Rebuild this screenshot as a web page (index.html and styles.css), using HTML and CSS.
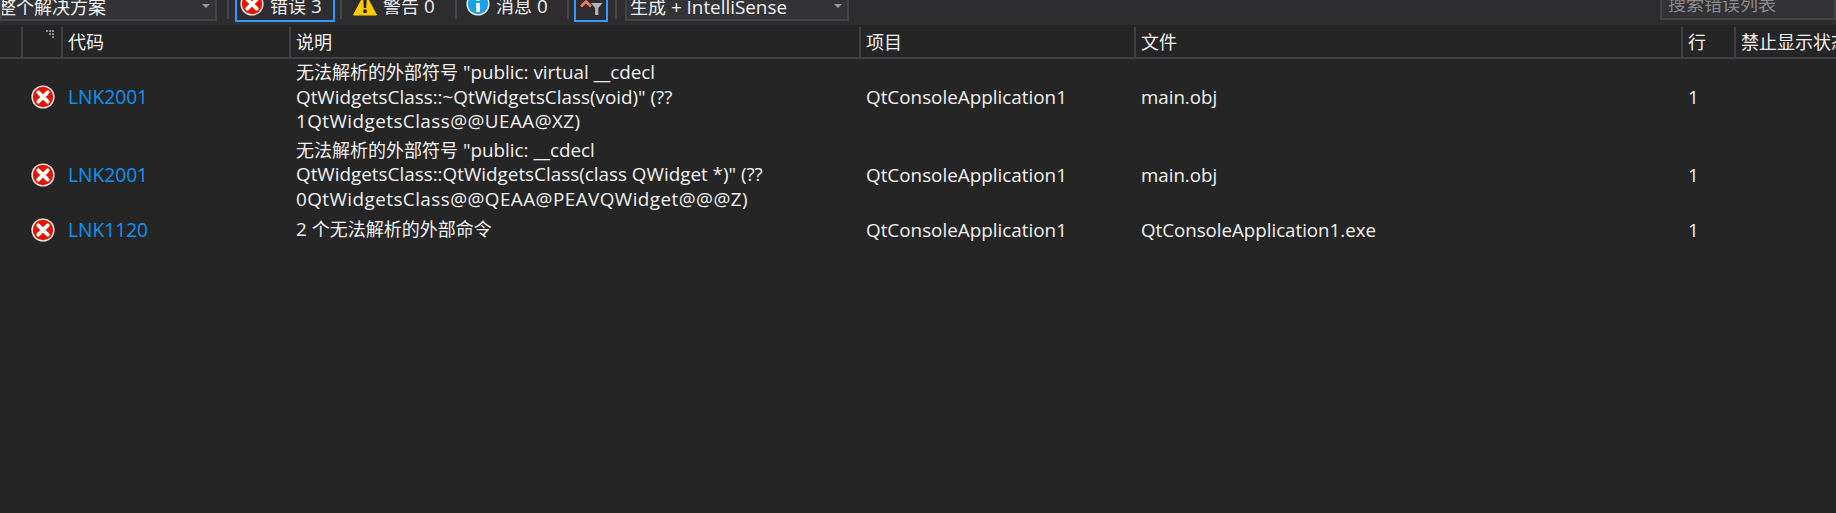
FILE: index.html
```html
<!DOCTYPE html>
<html lang="zh">
<head>
<meta charset="utf-8">
<title>错误列表</title>
<link rel="stylesheet" href="styles.css">
</head>
<body>
<svg class="defs" width="0" height="0">
  <symbol id="err" viewBox="0 0 24 24">
    <circle cx="12" cy="12" r="11.6" fill="#ececec"/>
    <circle cx="12" cy="12" r="10.2" fill="#e51400"/>
    <path d="M7.3 7.3l9.4 9.4M16.7 7.3l-9.4 9.4" stroke="#fff" stroke-width="3.8" stroke-linecap="round"/>
  </symbol>
</svg>
<div class="toolbar">
  <div class="combo scope"><span class="zh">整个解决方案</span><i class="caret"></i></div>
  <i class="grip g1"></i>
  <div class="tb errbtn"><svg class="ico"><use href="#err"/></svg><span><span class="zh">错误</span> 3</span></div>
  <i class="grip g2"></i>
  <div class="tb warnbtn">
    <svg class="ico" viewBox="0 0 24 24"><path d="M12 1.5L23.5 23H.5z" fill="#ffcc00" stroke="#ffcc00" stroke-width="1" stroke-linejoin="round"/><path d="M10.3 7h3.4l-.5 9h-2.4zM10.3 17.5h3.4V21h-3.4z" fill="#1e1e1e"/></svg>
    <span><span class="zh">警告</span> 0</span>
  </div>
  <i class="grip g3"></i>
  <div class="tb infobtn">
    <svg class="ico" viewBox="0 0 24 24"><circle cx="12" cy="12" r="11.6" fill="#ececec"/><circle cx="12" cy="12" r="10.2" fill="#1ba1e2"/><path d="M10.2 11h3.6v9h-3.6zM10.2 5.2h3.6v3.6h-3.6z" fill="#fff"/></svg>
    <span><span class="zh">消息</span> 0</span>
  </div>
  <i class="grip g4"></i>
  <div class="filter">
    <svg width="30" height="20" viewBox="0 0 30 20"><path d="M5 6.5l5-5 5 5" fill="none" stroke="#f47a5f" stroke-width="2.6"/><path d="M15 3h11.5l-4.2 5v7h-3.2V8z" fill="#b4b4b4"/></svg>
  </div>
  <i class="grip g5"></i>
  <div class="combo build"><span><span class="zh">生成</span> + IntelliSense</span><i class="caret"></i></div>
  <div class="search"><span class="zh">搜索错误列表</span></div>
</div>
<div class="list">
  <div class="row head">
    <div class="c0"></div>
    <div class="c1"><svg class="sort" width="9" height="9" viewBox="0 0 9 9"><path d="M0 0h2v2H0zM3 0h2v2H3zM6 0h2v2H6zM3 3h2v2H3zM6 3h2v2H6zM6 6h2v2H6z" fill="#8a8a8a"/></svg></div>
    <div class="c2 zh">代码</div>
    <div class="c3 zh">说明</div>
    <div class="c4 zh">项目</div>
    <div class="c5 zh">文件</div>
    <div class="c6 zh">行</div>
    <div class="c7 zh">禁止显示状态</div>
  </div>
  <div class="row item tall first">
    <div class="c0"></div>
    <div class="c1"><svg class="ico"><use href="#err"/></svg></div>
    <div class="c2 code">LNK2001</div>
    <div class="c3"><span class="zh">无法解析的外部符号</span> "public: virtual __cdecl<br>QtWidgetsClass::~QtWidgetsClass(void)" (??<br><span class="mangled">1QtWidgetsClass@@UEAA@XZ)</span></div>
    <div class="c4">QtConsoleApplication1</div>
    <div class="c5">main.obj</div>
    <div class="c6">1</div>
    <div class="c7"></div>
  </div>
  <div class="row item tall">
    <div class="c0"></div>
    <div class="c1"><svg class="ico"><use href="#err"/></svg></div>
    <div class="c2 code">LNK2001</div>
    <div class="c3"><span class="zh">无法解析的外部符号</span> "public: __cdecl<br>QtWidgetsClass::QtWidgetsClass(class QWidget *)" (??<br><span class="mangled">0QtWidgetsClass@@QEAA@PEAVQWidget@@@Z)</span></div>
    <div class="c4">QtConsoleApplication1</div>
    <div class="c5">main.obj</div>
    <div class="c6">1</div>
    <div class="c7"></div>
  </div>
  <div class="row item short">
    <div class="c0"></div>
    <div class="c1"><svg class="ico"><use href="#err"/></svg></div>
    <div class="c2 code">LNK1120</div>
    <div class="c3">2 <span class="zh">个无法解析的外部命令</span></div>
    <div class="c4">QtConsoleApplication1</div>
    <div class="c5">QtConsoleApplication1.exe</div>
    <div class="c6">1</div>
    <div class="c7"></div>
  </div>
</div>
</body>
</html>
```
FILE: styles.css
```css
html, body {
  margin: 0;
  height: 100%;
  overflow: hidden;
  background: #252526;
  color: #f1f1f1;
  font-family: "Open Sans", "Noto Sans CJK SC", sans-serif;
  font-size: 18.85px;
  line-height: 24px;
}
.zh { font-size: 18px; }
.defs { position: absolute; }
.toolbar {
  display: flex;
  align-items: flex-end;
  height: 25px;
  background: #2d2d30;
  overflow: hidden;
}
.combo, .search {
  flex: none;
  display: flex;
  align-items: flex-end;
  box-sizing: border-box;
  height: 32px;
  margin-bottom: 4px;
  background: #333337;
  border: 2px solid #434346;
  border-top-width: 0;
  white-space: nowrap;
}
.scope {
  width: 217px;
  justify-content: space-between;
  overflow: hidden;
  padding-right: 5px;
}
.scope > .zh { margin-left: -4px; }
.build {
  width: 224px;
  margin-left: 8px;
  padding: 0 5px 0 3px;
  justify-content: space-between;
}
.search {
  margin-left: auto;
  width: 176px;
  margin-bottom: 5px;
  padding: 0 0 2px 6px;
  color: #8a8a8a;
}
.caret {
  width: 0;
  height: 0;
  margin-bottom: 11px;
  border: 4.5px solid transparent;
  border-top: 4.5px solid #9a9a9a;
  border-bottom: 0;
}
.grip {
  flex: none;
  width: 2px;
  height: 25px;
  margin-bottom: 6px;
  background: #46464a;
}
.g1 { margin-left: 10px; }
.g2 { margin-left: 5px; }
.g3 { margin-left: 0; }
.g4 { margin-left: 0; }
.g5 { margin-left: 7px; }
.tb {
  flex: none;
  display: flex;
  align-items: flex-end;
  gap: 6px;
  height: 34px;
  box-sizing: border-box;
  margin-bottom: 3px;
  white-space: nowrap;
}
.tb > span { margin-bottom: -2px; }
.ico { width: 24px; height: 24px; display: block; flex: none; }
.errbtn {
  width: 100px;
  margin-left: 6px;
  padding: 0 0 4px 3px;
  border: 2px solid #3399ff;
}
.warnbtn { margin-left: 11px; padding-bottom: 6px; width: 102px; }
.infobtn { margin-left: 9px; padding-bottom: 6px; width: 101px; }
.filter {
  flex: none;
  box-sizing: border-box;
  width: 34px;
  height: 32px;
  margin-left: 5px;
  margin-bottom: 3px;
  border: 2px solid #3399ff;
  display: flex;
  justify-content: center;
  align-items: flex-end;
}
.row {
  display: grid;
  grid-template-columns: 22px 40px 228px 570px 275px 547px 53px 1fr;
}
.row > div {
  box-sizing: border-box;
  min-width: 0;
  white-space: nowrap;
  display: flex;
  align-items: center;
  padding-left: 6px;
}
.head {
  height: 30px;
  margin-top: 2px;
  box-shadow: 0 2px 0 #3f3f46;
  margin-bottom: 1px;
}
.head > div {
  border-right: 2px solid #3f3f46;
  margin-right: -1px;
  overflow: hidden;
}
.head > .c7 { border-right: 0; margin-right: 0; }
.head .c1 {
  position: relative;
  padding: 0;
}
.sort {
  position: absolute;
  top: 3px;
  right: 6px;
}
.item .c3 {
  display: block;
  align-self: center;
  line-height: 24.4px;
}
.item .c1 { padding: 0 0 0 9px; }
.item .c5 { font-size: 18.7px; }
.tall { height: 77px; }
.tall.first { height: 78px; }
.short { height: 33px; }
.code { color: #0c93f2; font-size: 19.2px; }
.mangled { letter-spacing: 0.45px; }
```
